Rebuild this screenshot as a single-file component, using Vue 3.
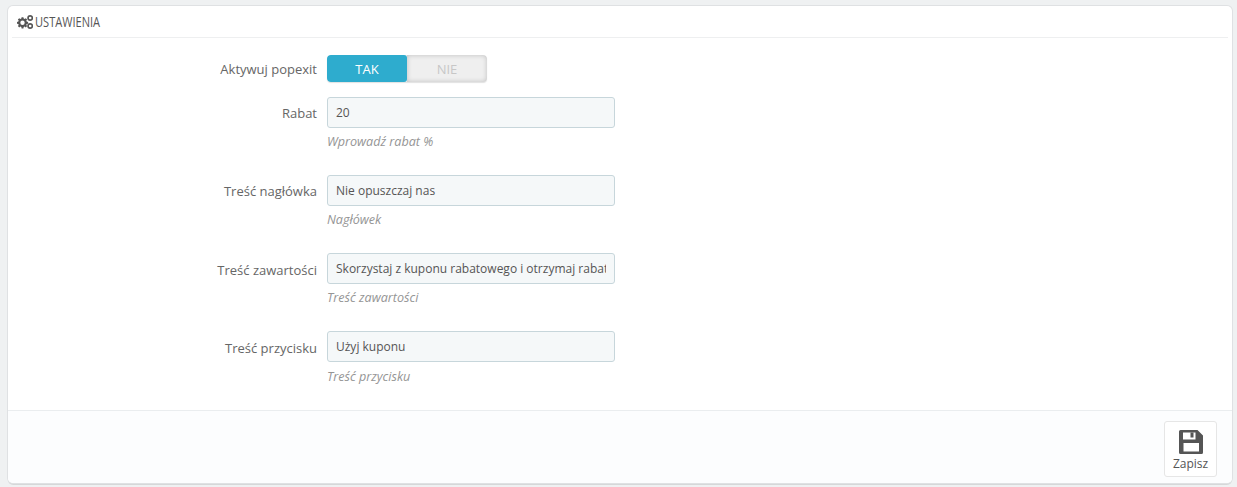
<script setup>
const fields = [
  { label: 'Rabat', value: '20', help: 'Wprowadź rabat %' },
  { label: 'Treść nagłówka', value: 'Nie opuszczaj nas', help: 'Nagłówek' },
  { label: 'Treść zawartości', value: 'Skorzystaj z kuponu rabatowego i otrzymaj rabat', help: 'Treść zawartości' },
  { label: 'Treść przycisku', value: 'Użyj kuponu', help: 'Treść przycisku' }
]
</script>

<template>
  <div class="page">
    <section class="panel">
      <header class="head">
        <svg class="cogs" viewBox="0 0 16 14" width="16" height="14" aria-hidden="true">
          <g fill="#555">
            <path fill-rule="evenodd" d="M4.600 2.200h1.800l.3 1.400.9.4 1.200-.8 1.300 1.300-.8 1.200.4.9 1.400.3v1.800l-1.400.3-.4.900.8 1.200-1.300 1.300-1.200-.8-.9.4-.3 1.400H4.600l-.3-1.400-.9-.4-1.200.8L.9 11.100l.8-1.200-.4-.9L0 8.700V6.900l1.300-.3.4-.9-.8-1.200 1.300-1.300 1.200.8.9-.4zM5.500 5.600a2.200 2.200 0 1 0 0 4.400 2.200 2.200 0 0 0 0-4.400z"/>
            <path fill-rule="evenodd" d="M13.200 0a3 3 0 1 1 0 6 3 3 0 0 1 0-6zm0 1.700a1.300 1.300 0 1 0 0 2.600 1.300 1.300 0 0 0 0-2.600z"/>
            <path fill-rule="evenodd" d="M13.200 8a3 3 0 1 1 0 6 3 3 0 0 1 0-6zm0 1.700a1.300 1.300 0 1 0 0 2.600 1.300 1.300 0 0 0 0-2.600z"/>
          </g>
        </svg>
        <span class="title">USTAWIENIA</span>
      </header>

      <div class="form">
        <div class="row row-switch">
          <div class="label">Aktywuj popexit</div>
          <div class="switch">
            <span class="on">TAK</span>
            <span class="off">NIE</span>
          </div>
        </div>

        <div v-for="f in fields" :key="f.label" class="row">
          <div class="label label-field">{{ f.label }}</div>
          <div class="control">
            <div class="input"><span class="clip">{{ f.value }}</span></div>
            <p class="help">{{ f.help }}</p>
          </div>
        </div>
      </div>

      <footer class="foot">
        <button class="save" type="button">
          <svg viewBox="0 0 24 24" width="24" height="24" aria-hidden="true">
            <path fill="#555" fill-rule="evenodd" d="M1.500 0H18.500L24 5.500V22.500A1.500 1.500 0 0 1 22.500 24H1.500A1.500 1.500 0 0 1 0 22.500V1.500A1.500 1.500 0 0 1 1.500 0zM4 2.500V9.500H16.500V2.500zM4.500 13V21.500H20V13z"/>
            <rect x="11.500" y="2.500" width="3" height="5" fill="#555"/>
          </svg>
          <span>Zapisz</span>
        </button>
      </footer>
    </section>
  </div>
</template>

<style>
html, body { margin: 0; background: #eff1f2; }
</style>

<style scoped>
.page {
  box-sizing: border-box;
  height: 487px;
  padding: 6px 5px 0 8px;
  font-family: "Open Sans", "Liberation Sans", sans-serif;
  font-size: 12px;
  color: #555;
  overflow: hidden;
}
.panel {
  box-sizing: border-box;
  height: 477px;
  background: #fff;
  border-radius: 5px;
  box-shadow: 0 0 0 1px #dfe1e3, 0 2px 0 rgba(0, 0, 0, .1);
  display: flex;
  flex-direction: column;
}
.head {
  box-sizing: border-box;
  height: 32px;
  margin: 0 4px;
  padding: 1px 0 0 5px;
  border-bottom: 1px solid #eeeff0;
  display: flex;
  align-items: center;
  gap: 2px;
}
.cogs { flex: none; }
.title {
  font-family: "Open Sans", "Liberation Sans", sans-serif;
  font-size: 14px;
  color: #555;
  line-height: 20px;
  transform: scaleX(.79);
  transform-origin: left center;
}
.form {
  flex: 1;
  padding-top: 17px;
}
.row {
  display: grid;
  grid-template-columns: 309px 288px;
  column-gap: 10px;
  height: 78px;
}
.row-switch {
  height: 42px;
}
.label {
  text-align: right;
  font-size: 13px;
  line-height: 18px;
  padding-top: 5px;
  color: #666;
}
.label-field {
  padding-top: 7px;
}
.row:nth-last-child(-n+2) .label-field {
  padding-top: 8px;
}
.switch {
  display: flex;
  width: 160px;
  height: 27px;
  border-radius: 4px;
  overflow: hidden;
  box-shadow: 0 1px 1px rgba(0, 0, 0, .12);
  background: #efefef;
  font-size: 13px;
  line-height: 28px;
  text-align: center;
}
.on {
  flex: 1;
  background: #2eacce;
  color: #fff;
  border-radius: 3px;
}
.off {
  flex: 1;
  color: #c7c7c7;
  border-radius: 0 4px 4px 0;
  box-shadow: inset 0 0 5px rgba(0, 0, 0, .2);
}
.control { min-width: 0; }
.input {
  box-sizing: border-box;
  height: 31px;
  padding: 0 8px;
  background: #f5f8f9;
  border: 1px solid #c7d6db;
  border-radius: 3px;
  font-size: 12px;
  line-height: 29px;
  color: #555;
}
.clip {
  display: block;
  overflow: hidden;
  white-space: nowrap;
}
.help {
  margin: 5px 0 0;
  font-size: 12.6px;
  line-height: 17px;
  font-style: italic;
  color: #959595;
}
.row:last-child .help {
  margin-top: 6px;
}
.foot {
  box-sizing: border-box;
  height: 73px;
  background: #fcfdfe;
  border-top: 1px solid #eaedef;
  border-radius: 0 0 5px 5px;
  padding: 10px 15px 0 0;
  display: flex;
  justify-content: flex-end;
  align-items: flex-start;
}
.save {
  box-sizing: border-box;
  width: 53px;
  height: 56px;
  padding: 8px 0 0;
  background: #fff;
  border: 1px solid #e6e6e6;
  border-radius: 3px;
  font-family: inherit;
  font-size: 12px;
  line-height: 15px;
  color: #555;
  display: flex;
  flex-direction: column;
  align-items: center;
  gap: 2px;
}
</style>
